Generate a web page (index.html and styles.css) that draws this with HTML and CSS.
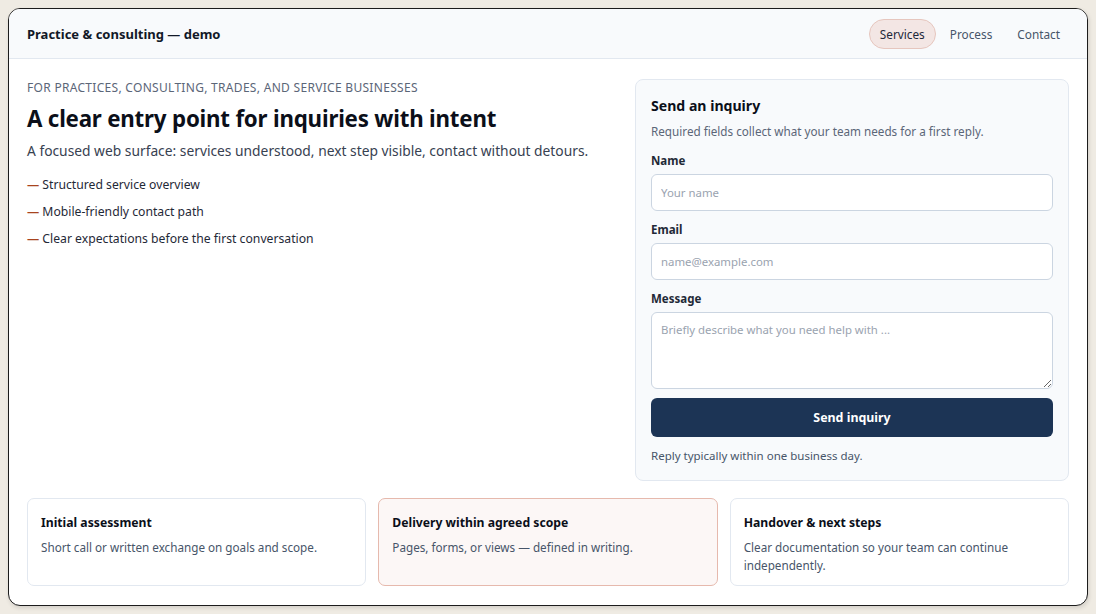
FILE: index.html
```html
<!DOCTYPE html>
<html lang="en">
    <head>
        <meta charset="UTF-8">
        <meta name="viewport" content="width=device-width, initial-scale=1.0">
        <title>Practice &amp; consulting — demo</title>
        <link rel="stylesheet" href="styles.css">
    </head>
    <body>
        <div class="frame">
            <header class="topbar">
                <div class="brand">Practice &amp; consulting — demo</div>
                <nav class="nav">
                    <a class="nav-item active" href="#services">Services</a>
                    <a class="nav-item" href="#process">Process</a>
                    <a class="nav-item" href="#contact">Contact</a>
                </nav>
            </header>

            <main class="main">
                <div class="hero">
                    <section class="intro">
                        <div class="eyebrow">For practices, consulting, trades, and service businesses</div>
                        <h1>A clear entry point for inquiries with intent</h1>
                        <p class="lead">A focused web surface: services understood, next step visible, contact without detours.</p>
                        <ul class="points">
                            <li><span class="dash">—</span> Structured service overview</li>
                            <li><span class="dash">—</span> Mobile-friendly contact path</li>
                            <li><span class="dash">—</span> Clear expectations before the first conversation</li>
                        </ul>
                    </section>

                    <form class="inquiry" id="contact">
                        <h2>Send an inquiry</h2>
                        <p class="form-note">Required fields collect what your team needs for a first reply.</p>
                        <label class="field-label" for="name">Name</label>
                        <input class="field" id="name" type="text" placeholder="Your name">
                        <label class="field-label" for="email">Email</label>
                        <input class="field" id="email" type="email" placeholder="name@example.com">
                        <label class="field-label" for="message">Message</label>
                        <textarea class="field area" id="message" placeholder="Briefly describe what you need help with ..."></textarea>
                        <button class="send" type="submit">Send inquiry</button>
                        <p class="reply">Reply typically within one business day.</p>
                    </form>
                </div>

                <div class="steps" id="process">
                    <div class="step">
                        <h3>Initial assessment</h3>
                        <p>Short call or written exchange on goals and scope.</p>
                    </div>
                    <div class="step accent">
                        <h3>Delivery within agreed scope</h3>
                        <p>Pages, forms, or views — defined in writing.</p>
                    </div>
                    <div class="step">
                        <h3>Handover &amp; next steps</h3>
                        <p>Clear documentation so your team can continue independently.</p>
                    </div>
                </div>
            </main>
        </div>
    </body>
</html>
```

FILE: styles.css
```css
*{
    box-sizing: border-box;
}
body{
    margin: 0;
    padding: 8px;
    background-color: #efebe3;
    font-family: "Noto Sans", "Open Sans", sans-serif;
    color: #0f172a;
}
.frame{
    height: 598px;
    background-color: white;
    border: 1px solid #1c1c1c;
    border-radius: 12px;
    overflow: hidden;
    box-shadow: 1px 2px 4px rgba(0,0,0,0.12);
}
.topbar{
    height: 50px;
    display: flex;
    align-items: center;
    justify-content: space-between;
    padding: 0 16px 0 18px;
    background-color: #f8fafc;
    border-bottom: 1px solid #e2e8f0;
}
.brand{
    font-size: 13px;
    font-weight: bold;
    color: #111827;
}
.nav{
    display: flex;
    gap: 3px;
}
.nav-item{
    padding: 7px 10px;
    font-size: 11.8px;
    line-height: 14px;
    color: #475569;
    text-decoration: none;
    border: 1px solid transparent;
    border-radius: 16px;
}
.nav-item.active{
    color: #1e293b;
    background-color: #f3e6e4;
    border-color: #e6c6be;
}
.main{
    padding: 20px 18px 19px;
}
.hero{
    display: grid;
    grid-template-columns: 1fr 434px;
    gap: 19px;
    align-items: start;
}
.eyebrow{
    margin-top: 1px;
    font-size: 12px;
    line-height: 16px;
    letter-spacing: 0.3px;
    text-transform: uppercase;
    color: #5b6678;
}
h1{
    margin: 8px 0 7px;
    font-size: 22.3px;
    line-height: 30px;
    letter-spacing: -0.2px;
    color: #0b0f19;
}
.lead{
    margin: 0 0 15px;
    font-size: 13.8px;
    line-height: 20px;
    color: #374151;
}
.points{
    list-style: none;
    margin: 0;
    padding: 0;
}
.points li{
    font-size: 12.2px;
    line-height: 18px;
    margin-bottom: 9px;
    color: #1f2937;
}
.dash{
    font-weight: 600;
    color: #a8441f;
}
.inquiry{
    display: flex;
    flex-direction: column;
    padding: 16px 15px 16px;
    background-color: #f8fafc;
    border: 1px solid #e2e8f0;
    border-radius: 8px;
}
h2{
    margin: 0 0 7px;
    font-size: 14.1px;
    line-height: 20px;
    color: #0b0f19;
}
.form-note{
    margin: 0 0 14px;
    font-size: 11.7px;
    line-height: 16px;
    color: #5b6678;
}
.field-label{
    font-size: 11.5px;
    line-height: 16px;
    font-weight: bold;
    color: #1f2937;
    margin-bottom: 5px;
}
.field{
    height: 37px;
    margin-bottom: 11px;
    padding: 0 9px;
    font-family: inherit;
    font-size: 11.4px;
    color: #1f2937;
    background-color: white;
    border: 1px solid #cbd5e1;
    border-radius: 6px;
}
.field::placeholder{
    color: #9aa3af;
}
.area{
    height: 77px;
    padding: 9px 9px;
    margin-bottom: 9px;
    resize: vertical;
}
.send{
    height: 39px;
    font-family: inherit;
    font-size: 12.4px;
    font-weight: bold;
    color: white;
    background-color: #1c3455;
    border: none;
    border-radius: 6px;
    cursor: pointer;
}
.reply{
    margin: 11px 0 0;
    font-size: 11.5px;
    line-height: 16px;
    color: #475569;
}
.steps{
    display: grid;
    grid-template-columns: repeat(3, 1fr);
    gap: 12px;
    margin-top: 17px;
}
.step{
    height: 88px;
    padding: 15px 13px;
    border: 1px solid #e2e8f0;
    border-radius: 7px;
}
.step.accent{
    background-color: #fcf7f6;
    border-color: #e6b9ad;
}
h3{
    margin: 0 0 6px;
    font-size: 12.2px;
    line-height: 18px;
    color: #0b0f19;
}
.step p{
    margin: 0;
    font-size: 11.7px;
    line-height: 18px;
    color: #475569;
}
```
